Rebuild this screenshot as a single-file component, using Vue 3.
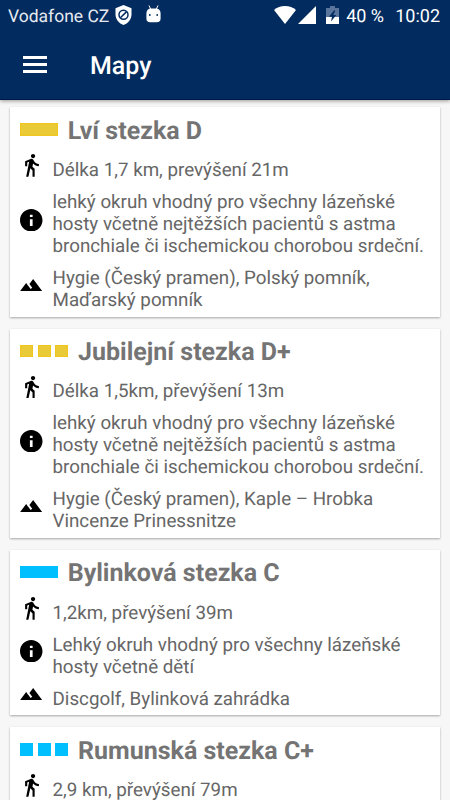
<script setup>
const trails = [
  {
    name: 'Lví stezka D', color: 'yellow', dashed: false,
    rows: [
      { icon: 'walk', lines: ['Délka 1,7 km, prevýšení 21m'] },
      { icon: 'info', lines: ['lehký okruh vhodný pro všechny lázeňské', 'hosty včetně nejtěžších pacientů s astma', 'bronchiale či ischemickou chorobou srdeční.'] },
      { icon: 'hills', lines: ['Hygie (Český pramen), Polský pomník,', 'Maďarský pomník'] },
    ],
  },
  {
    name: 'Jubilejní stezka D+', color: 'yellow', dashed: true,
    rows: [
      { icon: 'walk', lines: ['Délka 1,5km, převýšení 13m'] },
      { icon: 'info', lines: ['lehký okruh vhodný pro všechny lázeňské', 'hosty včetně nejtěžších pacientů s astma', 'bronchiale či ischemickou chorobou srdeční.'] },
      { icon: 'hills', lines: ['Hygie (Český pramen), Kaple – Hrobka', 'Vincenze Prinessnitze'] },
    ],
  },
  {
    name: 'Bylinková stezka C', color: 'blue', dashed: false,
    rows: [
      { icon: 'walk', lines: ['1,2km, převýšení 39m'] },
      { icon: 'info', lines: ['Lehký okruh vhodný pro všechny lázeňské', 'hosty včetně dětí'] },
      { icon: 'hills', lines: ['Discgolf, Bylinková zahrádka'] },
    ],
  },
  {
    name: 'Rumunská stezka C+', color: 'blue', dashed: true,
    rows: [
      { icon: 'walk', lines: ['2,9 km, převýšení 79m'] },
    ],
  },
]

const icons = {
  walk: {
    box: '6 1.5 13 21.5',
    d: 'M13.5 5.5c1.1 0 2-.9 2-2s-.9-2-2-2-2 .9-2 2 .9 2 2 2zM9.8 8.9L7 23h2.1l1.8-8 2.1 2v6h2v-7.5l-2.1-2 .6-3C14.8 12 16.8 13 19 13v-2c-1.9 0-3.5-1-4.3-2.4l-1-1.6c-.4-.6-1-1-1.7-1-.3 0-.5.1-.8.1L6 8.3V13h2V9.6l1.8-.7',
  },
  info: {
    box: '2 2 20 20',
    d: 'M12 2C6.48 2 2 6.48 2 12s4.48 10 10 10 10-4.48 10-10S17.52 2 12 2zm1.2 15h-2.4v-6h2.4v6zm0-7.8h-2.4V7h2.4v2.2z',
  },
  hills: {
    box: '1 6 22 12',
    d: 'M14 6l-3.75 5 2.85 3.8-1.6 1.2C9.81 13.75 7 10 7 10l-6 8h22L14 6z',
  },
}
</script>

<template>
  <div class="screen">
    <header class="appbar">
      <div class="status">
        <span class="carrier">Vodafone CZ</span>
        <svg class="shield" viewBox="0 0 17 20">
          <path d="M8.5 0 L16.5 3.2 V9.5 C16.5 14.5 13 18.4 8.5 20 C4 18.4 .5 14.5 .5 9.5 V3.2 Z" fill="#fff" />
          <circle cx="8.5" cy="9.7" r="4.5" fill="none" stroke="#022b5f" stroke-width="1.5" />
          <path d="M5.4 12.8 L11.6 6.6" stroke="#022b5f" stroke-width="1.5" />
        </svg>
        <svg class="robot" viewBox="0 0 15 18">
          <path d="M3 .5 L4.6 4 M12 .5 L10.4 4" stroke="#fff" stroke-width="1" />
          <path d="M.4 8.5 C.4 5.2 2.4 3.5 5 3.5 H10 C12.6 3.5 14.6 5.2 14.6 8.5 V13.5 Q14.6 17.3 10.8 17.3 H4.2 Q.4 17.3 .4 13.5 Z" fill="#fff" />
          <circle cx="3.8" cy="10" r=".9" fill="#022b5f" />
          <circle cx="11.2" cy="10" r=".9" fill="#022b5f" />
        </svg>
        <span class="spacer"></span>
        <svg class="wifi" viewBox="0 0 22 18">
          <path d="M0 4 Q4.5 0 11 0 Q17.5 0 22 4 L11 18 Z" fill="#fff" />
        </svg>
        <svg class="signal" viewBox="0 0 18 18"><path d="M18 0 V18 H0 Z" fill="#fff" /></svg>
        <svg class="battery" viewBox="0 0 13 18">
          <path d="M0 2 H4 V0 H9 V2 H13 V11 H0 Z" fill="#5a759b" />
          <path d="M0 11 H13 V18 H0 Z" fill="#fff" />
          <path d="M8 4.5 L3 10.7 H6 L5 15.5 L10.3 9 H7.3 L9.3 4.5 Z" fill="#022b5f" />
        </svg>
        <span class="percent">40 %</span>
        <span class="clock">10:02</span>
      </div>
      <div class="toolbar">
        <div class="burger"><i></i><i></i><i></i></div>
        <h1>Mapy</h1>
      </div>
    </header>

    <main class="list">
      <article v-for="t in trails" :key="t.name" class="card">
        <div class="heading">
          <div class="mark" :class="t.color">
            <template v-if="t.dashed"><b></b><b></b><b></b></template>
            <b v-else class="solid"></b>
          </div>
          <h2>{{ t.name }}</h2>
        </div>
        <div v-for="r in t.rows" :key="r.icon" class="row">
          <div class="icon">
            <svg :class="r.icon" :viewBox="icons[r.icon].box">
              <path :d="icons[r.icon].d" />
            </svg>
          </div>
          <p><span v-for="l in r.lines" :key="l">{{ l }}</span></p>
        </div>
      </article>
    </main>
  </div>
</template>

<style>
body {
  margin: 0;
  overflow: hidden;
}
</style>

<style scoped>
.screen {
  width: 450px;
  height: 800px;
  overflow: hidden;
  display: flex;
  flex-direction: column;
  background: #f7f7f7;
  font-family: Roboto, sans-serif;
  text-rendering: geometricPrecision;
  color: #666;
}
svg {
  display: block;
  flex: none;
}
.appbar {
  flex: none;
  height: 100px;
  box-sizing: border-box;
  background: #022b5f;
  border-bottom: 1px solid #001748;
  color: #fff;
  box-shadow: 0 1px 4px rgba(0, 0, 0, 0.4);
  z-index: 1;
}
.status {
  height: 32px;
  box-sizing: border-box;
  padding: 0 10px 0 8px;
  display: flex;
  align-items: center;
  font-size: 18px;
  line-height: 32px;
  white-space: nowrap;
}
.status span { padding-top: 1px; }
.carrier { width: 107px; font-size: 17.5px; color: #e6eaf0; }
.shield { width: 17px; height: 20px; margin-top: -2px; }
.robot { width: 15px; height: 18px; margin: -4px 0 0 14px; }
.spacer { flex: 1; }
.wifi { width: 22px; height: 18px; margin-top: -3px; }
.signal { width: 18px; height: 18px; margin: -3px 0 0 2px; }
.battery { width: 13px; height: 18px; margin: -2px 7px 0 10px; }
.percent { width: 49px; }
.toolbar {
  height: 67px;
  display: flex;
  align-items: center;
  padding-left: 23px;
}
.burger {
  width: 24px;
  margin: -2px 43px 0 0;
  display: flex;
  flex-direction: column;
  gap: 4px;
}
.burger i { height: 3px; background: #fff; }
h1 {
  margin: 0;
  padding-top: 2px;
  font-size: 25px;
  font-weight: 500;
  line-height: 30px;
}
.list {
  padding: 7.4px 10px 0;
  display: flex;
  flex-direction: column;
  gap: 12px;
}
.card {
  flex: none;
  padding: 0 10px 0.4px;
  background: #fff;
  box-shadow: 0 1px 2px rgba(0, 0, 0, 0.32);
}
.heading {
  height: 46.8px;
  display: flex;
  align-items: center;
}
.mark {
  display: flex;
  gap: 4.5px;
  margin-right: 10px;
  padding-bottom: 2.2px;
}
.mark b {
  width: 13px;
  height: 12.7px;
  box-sizing: border-box;
}
.mark b.solid { width: 37.7px; }
.yellow b { background: #ebca38; border: 1px solid #f0c61c; }
.blue b { background: #00bfff; }
h2 {
  margin: 0;
  padding-top: 2.6px;
  font-size: 25px;
  line-height: 30px;
  font-weight: 700;
  color: #747474;
  white-space: nowrap;
}
.row {
  display: flex;
  padding: 5px 0;
}
.icon {
  width: 23px;
  margin: -5px 9.5px -5px 0;
  padding-bottom: 8.8px;
  display: flex;
  align-items: center;
  justify-content: center;
}
.walk { width: 14px; height: 22.8px; }
.info { width: 22.5px; height: 22.5px; }
.hills { width: 22.3px; height: 12px; }
p {
  margin: 0;
  font-size: 18.78px;
  line-height: 22px;
  white-space: nowrap;
}
p span { display: block; }
</style>
